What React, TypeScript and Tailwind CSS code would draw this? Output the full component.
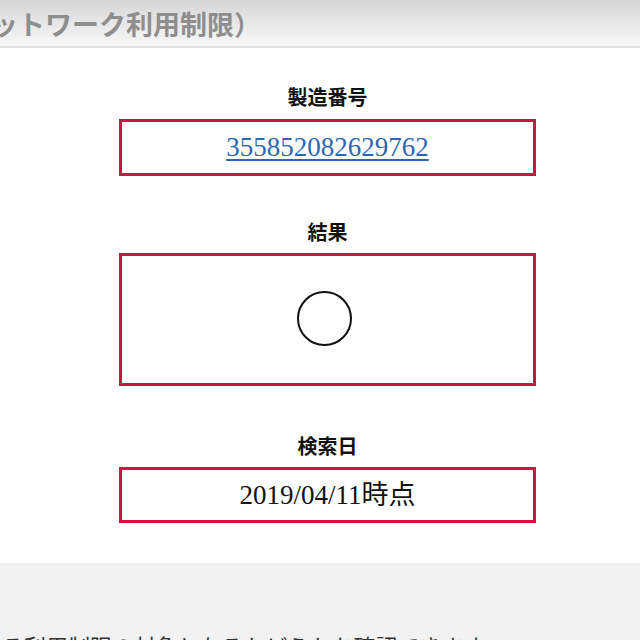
const serif = "font-['Liberation_Serif','Noto_Sans_CJK_JP',serif]";

function Label({ text, className = '' }: { text: string; className?: string }) {
  return (
    <div className={`text-center text-[20px] leading-[28px] font-bold text-[#111] ${serif} ${className}`}>
      {text}
    </div>
  );
}

export default function App() {
  return (
    <div className="w-[640px] h-[640px] overflow-hidden bg-white font-['Noto_Sans_CJK_JP',sans-serif]">
      {/* Title bar */}
      <div className="h-[48px] bg-gradient-to-b from-[#d6d6d6] to-[#f8f8f8] border-b-2 border-[#e2e2e2] flex items-center overflow-hidden">
        <span className="ml-[-36px] whitespace-nowrap text-[27px] font-bold text-[#8e8e8e] leading-none">
          ネットワーク利用制限）
        </span>
      </div>

      {/* Result */}
      <div className="pt-[36px] pb-[40px]">
        <div className="ml-[119px] w-[417px]">
          <Label text="製造番号" />
          <div className="mt-[7px] h-[57px] border-[3px] border-[#d3113d] flex items-center justify-center">
            <a href="#" className={`text-[27px] leading-none text-[#2c68b2] underline underline-offset-[3px] ${serif}`}>
              355852082629762
            </a>
          </div>

          <Label text="結果" className="mt-[43px]" />
          <div className="mt-[6px] h-[133px] border-[3px] border-[#d3113d] flex items-center justify-center">
            <div className="w-[55px] h-[55px] rounded-full border-2 border-[#111] -mt-[3px] -ml-[6px]" />
          </div>

          <Label text="検索日" className="mt-[47px]" />
          <div className="mt-[6px] h-[56px] border-[3px] border-[#d3113d] flex items-center justify-center">
            <span className={`text-[27px] leading-none text-[#111] ${serif}`}>2019/04/11時点</span>
          </div>
        </div>
      </div>

      {/* Notes */}
      <div className="bg-[#f2f2f2] h-[200px] pt-[67px] pl-[2px]">
        <p className="text-[22px] leading-[30px] text-[#333] whitespace-nowrap">
          る利用制限の対象となるかどうかを確認できます。
        </p>
      </div>
    </div>
  );
}
